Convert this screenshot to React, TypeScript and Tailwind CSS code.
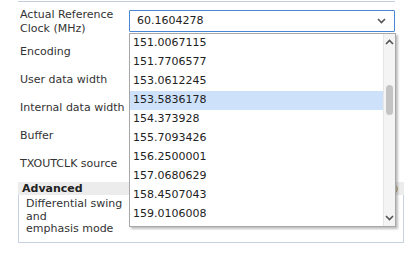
import React from "react";

const labels = [
  "Encoding",
  "User data width",
  "Internal data width",
  "Buffer",
  "TXOUTCLK source",
];

const options = [
  "151.0067115",
  "151.7706577",
  "153.0612245",
  "153.5836178",
  "154.373928",
  "155.7093426",
  "156.2500001",
  "157.0680629",
  "158.4507043",
  "159.0106008",
];

function Chevron({ up }: { up?: boolean }) {
  return (
    <svg width="9" height="6" viewBox="0 0 9 6" className="block">
      <path
        d={up ? "M1 5 L4.5 1.5 L8 5" : "M1 1 L4.5 4.5 L8 1"}
        fill="none"
        stroke="#555"
        strokeWidth="1.6"
      />
    </svg>
  );
}

export default function App() {
  return (
    <div
      className="relative w-[419px] h-[254px] bg-white text-[11px] text-[#333]"
      style={{ fontFamily: '"DejaVu Sans", Verdana, sans-serif' }}
    >
      <div className="ml-[18px] w-[377px] h-[2px] border-b border-[#c3cde0]" />

      <div className="pl-[20px] pt-[5px]">
        <div className="flex items-start h-[31px] pt-[3px]">
          <div className="w-[109px] leading-[14px] -mt-[2px]">
            Actual Reference
            <br />
            Clock (MHz)
          </div>
          <div className="relative w-[266px] h-[22px] border border-[#4a86d8] rounded-[1px] flex items-center justify-between pl-[7px] pr-[8px] text-[#222]">
            <span>60.1604278</span>
            <Chevron />
          </div>
        </div>
        {labels.map((l) => (
          <div key={l} className="flex items-center h-[28px]">
            <div className="w-[109px]">{l}</div>
          </div>
        ))}
      </div>

      <div className="ml-[18px] mt-[4px] w-[386px]">
        <div className="flex items-center justify-between h-[13px] bg-[#ececec] pl-[4px] pr-[6px]">
          <span className="font-bold text-[#222] leading-[13px]">Advanced</span>
          <span className="w-[10px] h-[10px] rounded-full bg-[#d8cfae] border border-[#b9ad88]" />
        </div>
        <div className="h-[48px] border border-t-0 border-[#c9d2e3] pl-[7px] pt-[3px] leading-[12.5px]">
          Differential swing
          <br />
          and
          <br />
          emphasis mode
        </div>
      </div>

      <div className="absolute left-[129px] top-[33px] w-[267px] h-[194px] bg-white border border-[#a8a8a8] shadow-[2px_2px_2px_rgba(0,0,0,0.25)] flex text-[#222]">
        <div className="flex-1 flex flex-col">
          {options.map((o, i) => (
            <div
              key={o}
              className={`h-[19px] flex items-center pl-[3px] ${i === 3 ? "bg-[#cde1fb]" : ""}`}
            >
              {o}
            </div>
          ))}
        </div>
        <div className="w-[12px] bg-[#f4f4f4] border-l border-[#e6e6e6] flex flex-col items-center justify-between py-[5px]">
          <Chevron up />
          <div className="mt-[40px] w-[7px] h-[30px] rounded-[4px] bg-[#c4c4c4] mb-auto" />
          <Chevron />
        </div>
      </div>
    </div>
  );
}
